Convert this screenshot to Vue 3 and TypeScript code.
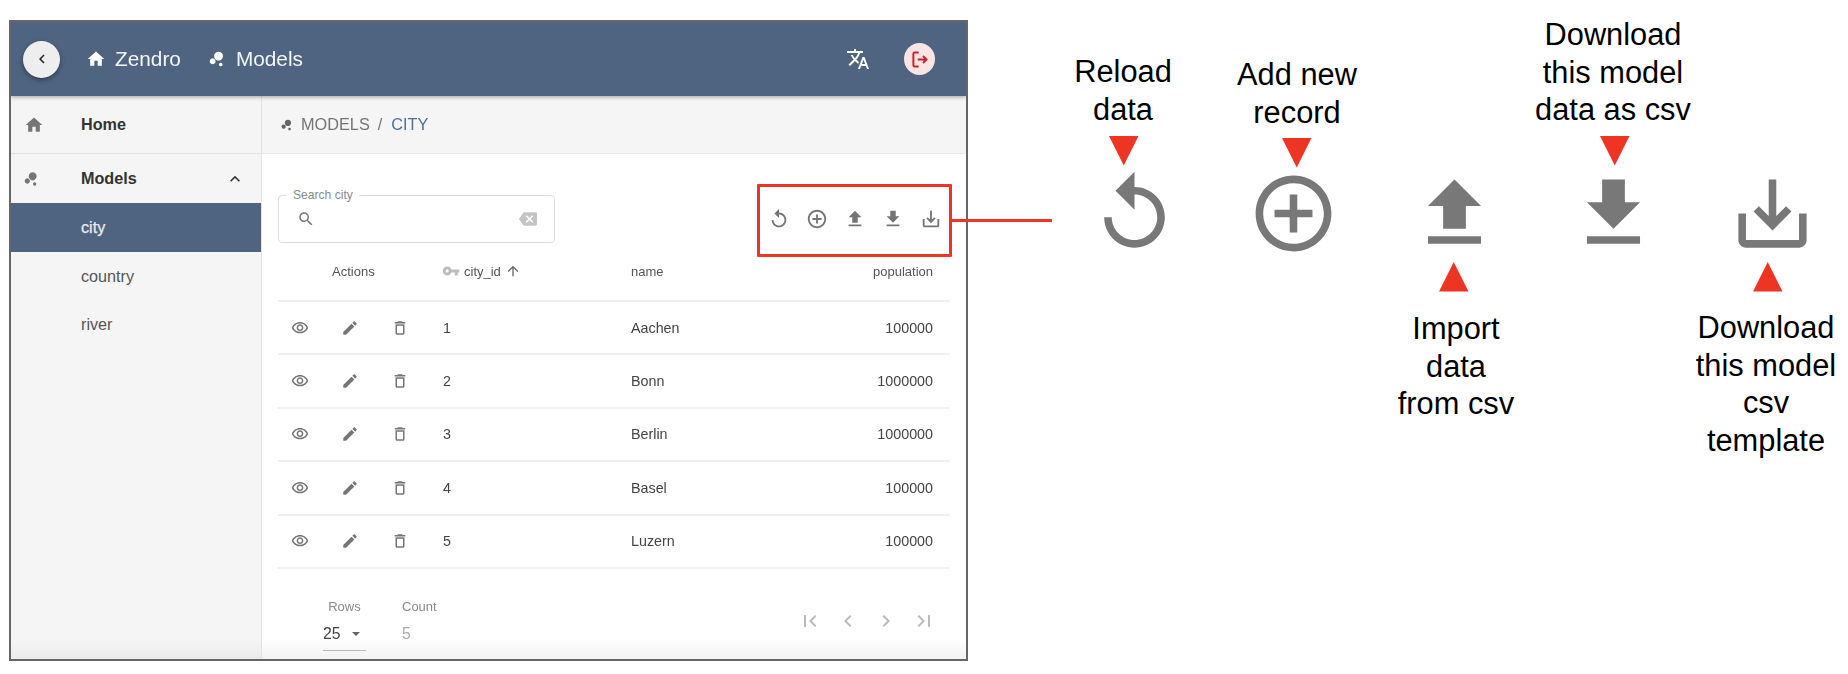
<script setup lang="ts">
const P = {
  home: 'M10 20v-6h4v6h5v-8h3L12 3 2 12h3v8z',
  bubble: 'M7.2 14.4a3.2 3.2 0 1 0 0 .01zM14.8 18a2 2 0 1 0 0 .01zM15.2 8.8a4.8 4.8 0 1 0 0 .01z',
  back: 'M15.41 7.41L14 6l-6 6 6 6 1.41-1.41L10.83 12z',
  next: 'M10 6L8.59 7.41 13.17 12l-4.58 4.59L10 18l6-6z',
  first: 'M18.41 16.59L13.82 12l4.59-4.59L17 6l-6 6 6 6zM6 6h2v12H6z',
  last: 'M5.59 7.41L10.18 12l-4.59 4.59L7 18l6-6-6-6zM16 6h2v12h-2z',
  less: 'M12 8l-6 6 1.41 1.41L12 10.83l4.59 4.58L18 14z',
  search: 'M15.5 14h-.79l-.28-.27C15.41 12.59 16 11.11 16 9.5 16 5.91 13.09 3 9.5 3S3 5.91 3 9.5 5.91 16 9.5 16c1.61 0 3.09-.59 4.23-1.57l.27.28v.79l5 4.99L20.49 19l-4.99-5zm-6 0C7.01 14 5 11.99 5 9.5S7.01 5 9.5 5 14 7.01 14 9.5 11.99 14 9.5 14z',
  clear: 'M22 3H7c-.69 0-1.23.35-1.59.88L0 12l5.41 8.11c.36.53.9.89 1.59.89h15c1.1 0 2-.9 2-2V5c0-1.1-.9-2-2-2zm-3 12.59L17.59 17 14 13.41 10.41 17 9 15.59 12.59 12 9 8.41 10.41 7 14 10.59 17.59 7 19 8.41 15.41 12 19 15.59z',
  replay: 'M12 5V1L7 6l5 5V7c3.31 0 6 2.69 6 6s-2.69 6-6 6-6-2.69-6-6H4c0 4.42 3.58 8 8 8s8-3.58 8-8-3.58-8-8-8z',
  add: 'M13 7h-2v4H7v2h4v4h2v-4h4v-2h-4V7zm-1-5C6.48 2 2 6.48 2 12s4.48 10 10 10 10-4.48 10-10S17.52 2 12 2zm0 18c-4.41 0-8-3.59-8-8s3.59-8 8-8 8 3.59 8 8-3.59 8-8 8z',
  upload: 'M9 16h6v-6h4l-7-7-7 7h4zm-4 2h14v2H5z',
  download: 'M19 9h-4V3H9v6H5l7 7 7-7zM5 18v2h14v-2H5z',
  save: 'M19 12v7H5v-7H3v7c0 1.1.9 2 2 2h14c1.1 0 2-.9 2-2v-7h-2zm-6 .67l2.59-2.58L17 11.5l-5 5-5-5 1.41-1.41L11 12.67V3h2z',
  eye: 'M12 6c3.79 0 7.17 2.13 8.82 5.5C19.17 14.87 15.79 17 12 17s-7.17-2.13-8.82-5.5C4.83 8.13 8.21 6 12 6m0-2C7 4 2.73 7.11 1 11.5 2.73 15.89 7 19 12 19s9.27-3.11 11-7.5C21.27 7.11 17 4 12 4zm0 5c1.38 0 2.5 1.12 2.5 2.5S13.38 14 12 14s-2.5-1.12-2.5-2.5S10.62 9 12 9m0-2c-2.48 0-4.5 2.02-4.5 4.5S9.52 16 12 16s4.5-2.02 4.5-4.5S14.48 7 12 7z',
  edit: 'M3 17.25V21h3.75L17.81 9.94l-3.75-3.75L3 17.25zM20.71 7.04c.39-.39.39-1.02 0-1.41l-2.34-2.34c-.39-.39-1.02-.39-1.41 0l-1.83 1.83 3.75 3.75 1.83-1.83z',
  trash: 'M6 19c0 1.1.9 2 2 2h8c1.1 0 2-.9 2-2V7H6v12zM8 9h8v10H8V9zm7.5-5l-1-1h-5l-1 1H5v2h14V4z',
  up: 'M4 12l1.41 1.41L11 7.83V20h2V7.83l5.58 5.59L20 12l-8-8-8 8z',
  key: 'M12.65 10C11.83 7.67 9.61 6 7 6c-3.31 0-6 2.69-6 6s2.69 6 6 6c2.61 0 4.83-1.67 5.65-4H17v4h4v-4h2v-4H12.65zM7 14c-1.1 0-2-.9-2-2s.9-2 2-2 2 .9 2 2-.9 2-2 2z',
  translate: 'M12.87 15.07l-2.54-2.51.03-.03c1.74-1.94 2.98-4.17 3.71-6.53H17V4h-7V2H8v2H1v1.99h11.17C11.5 7.92 10.44 9.75 9 11.35 8.07 10.32 7.3 9.19 6.69 8h-2c.73 1.63 1.73 3.17 2.98 4.56l-5.09 5.02L4 19l5-5 3.11 3.11.76-2.04zM18.5 10h-2L12 22h2l1.12-3h4.75L21 22h2l-4.5-12zm-2.62 7l1.62-4.33L19.12 17h-3.24z',
}

interface City { id: number; name: string; population: number }
const cities: City[] = [
  { id: 1, name: 'Aachen', population: 100000 },
  { id: 2, name: 'Bonn', population: 1000000 },
  { id: 3, name: 'Berlin', population: 1000000 },
  { id: 4, name: 'Basel', population: 100000 },
  { id: 5, name: 'Luzern', population: 100000 },
]
const models = ['city', 'country', 'river']
const toolbar = [P.replay, P.add, P.upload, P.download, P.save]
const rowActions = [P.eye, P.edit, P.trash]
const pager = [P.first, P.back, P.next, P.last]

interface Note { lines: string[]; x: number; y: number }
const notes: Note[] = [
  { lines: ['Reload', 'data'], x: 1123, y: 53 },
  { lines: ['Add new', 'record'], x: 1297, y: 56 },
  { lines: ['Import', 'data', 'from csv'], x: 1456, y: 310 },
  { lines: ['Download', 'this model', 'data as csv'], x: 1613, y: 16 },
  { lines: ['Download', 'this model', 'csv', 'template'], x: 1766, y: 309 },
]
const bigIcons = [
  { d: P.replay, x: 1089, y: 168 },
  { d: P.add, x: 1247.5, y: 168 },
  { d: P.upload, x: 1409, y: 168 },
  { d: P.download, x: 1568, y: 168 },
  { d: P.save, x: 1726.5, y: 168 },
]
const arrows = [
  { x: 1109, y: 136, up: false },
  { x: 1282, y: 138, up: false },
  { x: 1439, y: 262, up: true },
  { x: 1600, y: 136, up: false },
  { x: 1753, y: 262, up: true },
]
</script>

<template>
  <div class="page">
    <div class="frame">
      <header class="topbar">
        <button class="back-btn">
          <svg class="i18" viewBox="0 0 24 24"><path :d="P.back" /></svg>
        </button>
        <svg class="i20 home-ic" viewBox="0 0 24 24"><path :d="P.home" /></svg>
        <span class="top-link">Zendro</span>
        <svg class="i22 bubble-ic" viewBox="0 0 24 24"><path :d="P.bubble" /></svg>
        <span class="top-link">Models</span>
        <svg class="i24 translate-ic" viewBox="0 0 24 24"><path :d="P.translate" /></svg>
        <div class="logout">
          <svg viewBox="0 0 24 24" class="logout-svg">
            <path d="M11 4H6.5A1.5 1.5 0 0 0 5 5.5v13A1.5 1.5 0 0 0 6.5 20H11" />
            <path d="M10 12h10M16 8l4 4-4 4" />
          </svg>
        </div>
      </header>

      <div class="body">
        <aside class="sidebar">
          <div class="side-home">
            <svg class="i20 side-ic" viewBox="0 0 24 24"><path :d="P.home" /></svg>
            <strong>Home</strong>
          </div>
          <div class="side-models">
            <svg class="i20 side-ic" viewBox="0 0 24 24"><path :d="P.bubble" /></svg>
            <strong>Models</strong>
            <svg class="i20 side-chev" viewBox="0 0 24 24"><path :d="P.less" /></svg>
          </div>
          <div v-for="(m, i) in models" :key="m" class="side-item" :class="{ active: i === 0 }">{{ m }}</div>
        </aside>

        <main class="main">
          <div class="crumbs">
            <svg class="i16 crumb-ic" viewBox="0 0 24 24"><path :d="P.bubble" /></svg>
            <span>MODELS</span>
            <span class="slash">/</span>
            <span class="crumb-now">CITY</span>
          </div>

          <div class="content">
            <div class="toolbar">
              <div class="search">
                <span class="search-label">Search city</span>
                <svg class="i18 search-ic" viewBox="0 0 24 24"><path :d="P.search" /></svg>
                <svg class="i18 clear-ic" viewBox="0 0 24 24"><path :d="P.clear" /></svg>
              </div>
              <div class="tools">
                <svg v-for="d in toolbar" :key="d" class="i22" viewBox="0 0 24 24"><path :d="d" /></svg>
              </div>
            </div>

            <div class="row head">
              <div class="head-actions">Actions</div>
              <div class="head-id">
                <svg class="i18 key-ic" viewBox="0 0 24 24"><path :d="P.key" /></svg>
                <span>city_id</span>
                <svg class="i16 sort-ic" viewBox="0 0 24 24"><path :d="P.up" /></svg>
              </div>
              <div>name</div>
              <div class="num">population</div>
            </div>
            <div v-for="c in cities" :key="c.id" class="row">
              <div class="actions">
                <svg v-for="d in rowActions" :key="d" class="i18" viewBox="0 0 24 24"><path :d="d" /></svg>
              </div>
              <div>{{ c.id }}</div>
              <div>{{ c.name }}</div>
              <div class="num">{{ c.population }}</div>
            </div>

            <div class="footer">
              <div class="rows-col">
                <span class="foot-label">Rows</span>
                <div class="rows-val">25<i class="caret"></i></div>
              </div>
              <div class="count-col">
                <span class="foot-label">Count</span>
                <div class="count-val">5</div>
              </div>
              <div class="pager">
                <svg v-for="d in pager" :key="d" class="i24" viewBox="0 0 24 24"><path :d="d" /></svg>
              </div>
            </div>
          </div>
        </main>
      </div>
      <div class="bottom-fade"></div>
    </div>

    <!-- callouts on a free canvas -->
    <div class="callout-box"></div>
    <div class="callout-line"></div>
    <div
      v-for="n in notes"
      :key="n.lines.join()"
      class="note"
      :style="{ left: n.x - 110 + 'px', top: n.y + 'px' }"
    >
      <div v-for="l in n.lines" :key="l">{{ l }}</div>
    </div>
    <svg
      v-for="b in bigIcons"
      :key="b.d"
      class="big"
      viewBox="0 0 24 24"
      :style="{ left: b.x + 'px', top: b.y + 'px' }"
    ><path :d="b.d" /></svg>
    <div
      v-for="a in arrows"
      :key="a.x"
      class="tri"
      :class="{ up: a.up }"
      :style="{ left: a.x + 'px', top: a.y + 'px' }"
    ></div>
  </div>
</template>

<style scoped>
.page {
  position: relative;
  width: 1848px;
  height: 674px;
  overflow: hidden;
  background: #fff;
  padding: 20px 0 0 9px;
  box-sizing: border-box;
  font-family: "Liberation Sans", Arial, sans-serif;
}
svg { display: block; flex: none; fill: currentColor; }
.i16 { width: 16px; height: 16px; }
.i18 { width: 18px; height: 18px; }
.i20 { width: 20px; height: 20px; }
.i22 { width: 22px; height: 22px; }
.i24 { width: 24px; height: 24px; }

.frame {
  position: relative;
  width: 959px;
  height: 641px;
  box-sizing: border-box;
  border: 2px solid #666;
  display: flex;
  flex-direction: column;
  filter: blur(0.5px);
  overflow: hidden;
}
.topbar {
  position: relative;
  z-index: 2;
  height: 74px;
  flex: none;
  background: #4f6480;
  color: #fff;
  display: flex;
  align-items: center;
  padding-left: 12px;
  box-shadow: 0 1px 4px rgba(0, 0, 0, 0.35);
}
.back-btn {
  width: 37px;
  height: 37px;
  border: 0;
  padding: 0;
  border-radius: 50%;
  background: #eeeeee;
  color: #222;
  display: flex;
  align-items: center;
  justify-content: center;
  box-shadow: 0 2px 5px rgba(0, 0, 0, 0.4);
}
.home-ic { margin-left: 26px; }
.top-link { font-size: 20.8px; color: #f4f6f8; margin-left: 9px; }
.bubble-ic { margin-left: 28px; }
.bubble-ic + .top-link { margin-left: 5px; }
.translate-ic { margin-left: auto; margin-right: 34px; }
.logout {
  width: 31px;
  height: 32px;
  margin-right: 31px;
  border-radius: 50%;
  background: #fbe4e4;
  display: flex;
  align-items: center;
  justify-content: center;
}
.logout-svg { width: 21px; height: 21px; fill: none; stroke: #c62030; stroke-width: 2.2; }

.body { flex: 1; display: flex; min-height: 0; }
.sidebar {
  width: 251px;
  flex: none;
  box-sizing: border-box;
  background: #f5f5f5;
  border-right: 1px solid #e2e2e2;
  color: #333;
  font-size: 16.2px;
}
.side-home, .side-models {
  display: flex;
  align-items: center;
  position: relative;
  padding-left: 70px;
}
.side-home { height: 58px; box-sizing: border-box; border-bottom: 1px solid #e4e4e4; }
.side-models { height: 49px; }
.side-ic { position: absolute; left: 13px; color: #757575; }
.side-chev { position: absolute; right: 16px; color: #333; }
.side-item {
  height: 48.7px;
  line-height: 48.7px;
  padding-left: 70px;
  color: #555;
}
.side-item.active { background: #4f6480; color: #e8ebf0; -webkit-text-stroke: 0.25px #e8ebf0; }

.main { flex: 1; display: flex; flex-direction: column; min-width: 0; }
.crumbs {
  height: 58px;
  flex: none;
  box-sizing: border-box;
  background: #f5f5f5;
  border-bottom: 1px solid #e6e6e6;
  display: flex;
  align-items: center;
  padding-left: 19px;
  font-size: 16.3px;
  color: #757575;
}
.crumb-ic { margin-right: 4px; color: #666; }
.slash { margin: 0 9px 0 8px; }
.crumb-now { color: #4f6f94; }

.content { flex: 1; padding: 0 16px; display: flex; flex-direction: column; min-height: 0; }
.toolbar {
  flex: none;
  display: flex;
  align-items: center;
  justify-content: space-between;
  padding: 41px 8px 6px 0;
}
.search {
  position: relative;
  width: 277px;
  height: 48px;
  box-sizing: border-box;
  border: 1.5px solid #dcdcdc;
  border-radius: 4px;
  display: flex;
  align-items: center;
  justify-content: space-between;
  padding: 0 17px 0 18px;
}
.search-label {
  position: absolute;
  left: 8px;
  top: -8px;
  padding: 0 6px;
  background: #fff;
  font-size: 12.1px;
  line-height: 14px;
  color: #8a8a8a;
}
.search-ic { color: #777; }
.clear-ic { color: #c4c4c4; }
.tools { display: flex; gap: 16px; color: #757575; }

.row {
  display: grid;
  grid-template-columns: 165px 188px 1fr 100px;
  align-items: center;
  height: 53.4px;
  box-sizing: border-box;
  border-bottom: 2px solid #f0f0f0;
  padding-right: 17px;
  font-size: 14.3px;
  color: #444;
  flex: none;
}
.row.head {
  height: 53px;
  font-size: 13px;
  color: #555;
  padding-bottom: 7px;
}
.head-actions { padding-left: 54px; }
.head-id { display: flex; align-items: center; font-size: 13px; margin-left: -1px; }
.key-ic { color: #bdbdbd; margin-right: 4px; }
.sort-ic { margin-left: 4px; color: #666; }
.num { text-align: right; }
.actions { display: flex; gap: 32px; padding-left: 12.5px; color: #757575; }

.footer { flex: 1; display: flex; align-items: flex-start; padding-left: 45px; padding-top: 30px; }
.rows-col { width: 43px; display: flex; flex-direction: column; align-items: center; }
.foot-label { display: block; font-size: 13px; line-height: 16px; color: #8a8a8a; }
.rows-val {
  align-self: stretch;
  margin-top: 9px;
  height: 27px;
  line-height: 20px;
  box-sizing: border-box;
  border-bottom: 1px solid #aaa;
  font-size: 15.8px;
  color: #444;
  display: flex;
  align-items: flex-start;
}
.caret {
  margin: 8px 0 0 11px;
  border-left: 4px solid transparent;
  border-right: 4px solid transparent;
  border-top: 4px solid #666;
}
.count-col { margin-left: 36px; }
.count-val { margin-top: 9px; line-height: 20px; font-size: 15.8px; color: #aaa; }
.pager { margin-left: auto; margin-right: 14px; margin-top: 10px; display: flex; gap: 14px; color: #bbb; }

.bottom-fade {
  position: absolute;
  left: 0;
  right: 0;
  bottom: 0;
  height: 20px;
  background: linear-gradient(rgba(225, 225, 225, 0), rgba(225, 225, 225, 0.45));
  pointer-events: none;
}

.callout-box {
  position: absolute;
  left: 757px;
  top: 184px;
  width: 195px;
  height: 73px;
  box-sizing: border-box;
  border: 3.5px solid #ee3524;
  border-radius: 1px;
}
.callout-line {
  position: absolute;
  left: 952px;
  top: 218.5px;
  width: 100px;
  height: 3px;
  background: #ee3524;
}
.note {
  position: absolute;
  width: 220px;
  text-align: center;
  font-size: 30.8px;
  line-height: 37.7px;
  color: #000;
}
.big {
  position: absolute;
  width: 91px;
  height: 91px;
  color: #787878;
}
.tri {
  position: absolute;
  width: 29.5px;
  height: 29.5px;
  background: #ee3524;
  clip-path: polygon(0 0, 100% 0, 50% 100%);
}
.tri.up { clip-path: polygon(50% 0, 100% 100%, 0 100%); }
</style>
